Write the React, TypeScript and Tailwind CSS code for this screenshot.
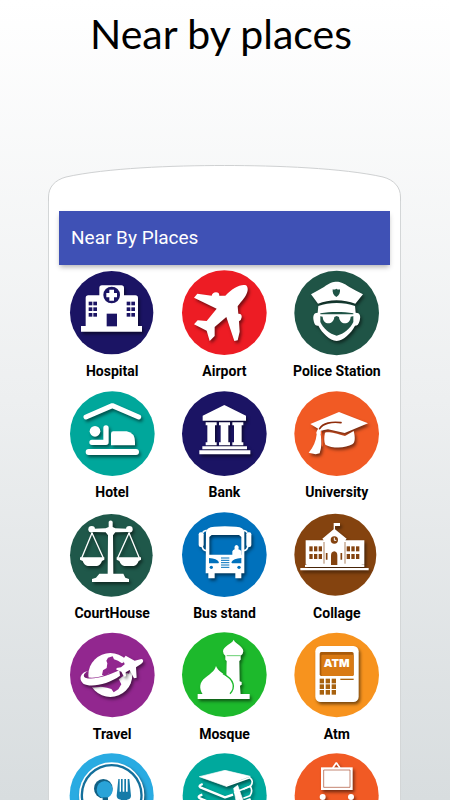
import type { ReactNode } from "react";

const SHADOW = "[filter:drop-shadow(5px_7px_4px_rgba(0,0,0,0.5))]";

type BadgeProps = { x: number; y: number; color: string; cx: number; cy: number; r?: number; children: ReactNode };

function Badge({ x, y, color, cx, cy, r = 126, children }: BadgeProps) {
  return (
    <svg viewBox={`${x} ${y} 255 255`} className="block size-[85px] overflow-visible" aria-hidden="true">
      <circle cx={cx} cy={cy} r={r} fill={color} />
      {children}
    </svg>
  );
}

function Hospital() {
  const c = "#1b1464";
  return (
    <Badge x={30} y={24} color={c} cx={155} cy={152} r={125}>
      <g className={SHADOW} fill="#fff">
        <path d="M118 78q0-8 8-8h58q8 0 8 8v22h34q8 0 8 8v84h12v17H63v-17h14v-84q0-8 8-8h33z" />
      </g>
      <circle cx="155" cy="99" r="25" fill={c} />
      <path d="M148 83h14v10h9v13h-9v10h-14v-10h-9v-13h9z" fill="#fff" />
      {[119, 136, 153].map((y) =>
        [86, 100, 200, 214].map((x) => <rect key={`${x}-${y}`} x={x} y={y} width="11" height="11" fill={c} />),
      )}
      <rect x="140" y="155" width="31" height="38" fill={c} />
    </Badge>
  );
}

function Airport() {
  return (
    <Badge x={30} y={24} color="#ed1c24" cx={157} cy={152} r={127}>
      <path
        className={SHADOW}
        fill="#fff"
        d="M222 70C232 78 228 98 205 122L197 133L199 155Q210 154 209 166Q208 175 201 178L203 209L197 235L187 237L163 165L128 195L128 222L113 237L104 206L66 187L77 175L104 177L134 140L66 107L76 95L119 101Q121 92 132 91Q142 91 142 101L160 101C180 80 206 65 222 70z"
      />
    </Badge>
  );
}

function Police() {
  const c = "#1f5446";
  return (
    <Badge x={30} y={24} color={c} cx={158} cy={153} r={127}>
      <g className={SHADOW} fill="#fff">
        <path d="M81 97c16-9 26-14 39-22 17-13 27-16 38-16s22 4 38 16c13 8 24 13 41 22l-23 28c-34-14-79-14-112 0z" />
        <path d="M103 132c32-12 78-12 110 0l2 20c13 0 16 10 12 24-3 11-7 15-14 15-13 24-33 43-55 46-22-3-42-22-55-46-8 0-12-4-14-15-3-14 0-24 12-24z" />
      </g>
      <path d="M157 80c4 3 8 3 11 2 1 10-2 18-11 23-9-5-12-13-11-23 3 1 7 1 11-2z" fill={c} />
      <path d="M109 154c30-5 68-5 99 0v26c-8 18-28 36-50 41-22-5-41-23-49-41z" fill={c} />
      <path d="M106 157h104v5l-10 2c-1 27-33 26-35 1l-7-3-7 3c-2 25-34 26-35-1l-10-2z" fill="#fff" />
    </Badge>
  );
}

function Hotel() {
  return (
    <Badge x={30} y={18} color="#00a79b" cx={157} cy={146} r={127}>
      <g className={SHADOW} fill="#fff">
        <path d="M78 96l79-34 79 34" fill="none" stroke="#fff" strokeWidth="15" strokeLinecap="round" strokeLinejoin="bevel" />
        <circle cx="105" cy="139" r="16" />
        <path d="M138 129v43H96" fill="none" stroke="#fff" strokeWidth="16" strokeLinecap="round" strokeLinejoin="round" />
        <path d="M153 181v-35q0-7 7-7h40q25 4 25 32v10z" />
        <rect x="77" y="192" width="160" height="18" rx="9" />
      </g>
    </Badge>
  );
}

function Bank() {
  return (
    <Badge x={30} y={18} color="#1b1464" cx={157} cy={146} r={127}>
      <g className={SHADOW} fill="#fff">
        <path d="M157 60l65 32v15H92V92z" />
        {[101, 141, 181].map((x) => (
          <path key={x} d={`M${x} 112h33v9h-5v51h5v9h-33v-9h5v-51h-5z`} />
        ))}
        <path d="M91 184h134v9H91zM82 196h153v12H82z" />
      </g>
    </Badge>
  );
}

function University() {
  const c = "#f15a24";
  return (
    <Badge x={366} y={18} color={c} cx={494} cy={146} r={127}>
      <g className={SHADOW} fill="#fff">
        <path d="M415 117l86-36 87 34-70 29-50-11-12 2-8 2z" />
        <path d="M459 143c11-4 29 1 60 10l26-15c5 18 5 36-4 40-19 12-60 13-81 1-4-10-4-22-1-36z" />
        <path d="M435 137q3-9 11-4 4 7 0 15c4 20 3 40-3 57l-12 3-21-5c14-15 22-35 24-55q-3-5 1-11z" />
      </g>
      <path d="M507 113c-28-4-55 2-64 18" fill="none" stroke="#8f2c0a" strokeWidth="5" strokeLinecap="round" />
      <path d="M448 139c0 8 5 30 3 45" fill="none" stroke={c} strokeWidth="4" />
    </Badge>
  );
}

function CourtHouse() {
  return (
    <Badge x={30} y={21} color="#1f584a" cx={154} cy={151} r={124}>
      <g className={SHADOW} fill="#fff">
        <path d="M146 50q6-7 12 0v16l8 4 38 1v10l-38 1-7 9 1 117h-17l1-117-7-9-38-1V71l38-1 9-4z" />
        <circle cx="95" cy="73" r="10" />
        <circle cx="208" cy="73" r="10" />
        <path d="M96 84l-31 75M96 84l34 75M207 84l-34 75M207 84l31 75" stroke="#fff" strokeWidth="4" fill="none" />
        <path d="M60 157h73v7l-7 4q-5 14-15 15H83q-10-1-15-15l-8-4zM170 157h73v7l-7 4q-5 14-15 15h-28q-10-1-15-15l-8-4z" />
        <path d="M118 206h72l6 12 11 4v9H96v-9l12-4z" />
      </g>
    </Badge>
  );
}

function Bus() {
  const c = "#0071bc";
  return (
    <Badge x={30} y={21} color={c} cx={157} cy={149} r={127}>
      <g className={SHADOW} fill="#fff">
        <path
          fillRule="evenodd"
          d="M102 82q0-15 25-17 31-3 65 0 25 2 25 17v123h-9v15h-18v-15h-62v15h-19v-15h-8zM112 96v53h96V96l-7-6h-82z"
        />
        <rect x="80" y="82" width="15" height="44" rx="6" />
        <rect x="223" y="82" width="15" height="44" rx="6" />
        <path d="M90 122q2 15 13 15M228 122q-2 15-13 15M92 83q3-6 12-7M226 83q-3-6-12-7" fill="none" stroke="#fff" strokeWidth="5" />
      </g>
      <path d="M181 150v-11q2-5 7-6-2-12 5-13 10 2 6 13 7 1 9 6v11z" fill="#fff" />
      <path d="M111 159q24 1 30 13l-2 3h-28zM208 159q-24 1-30 13l2 3h28z" fill={c} />
      <circle cx="118" cy="187" r="5" fill={c} />
      <circle cx="201" cy="187" r="5" fill={c} />
      <path d="M147 159h25M147 166h25M147 173h25M147 180h25M147 187h25" stroke={c} strokeWidth="3" />
    </Badge>
  );
}

function Collage() {
  const c = "#84430f";
  return (
    <Badge x={366} y={21} color={c} cx={490} cy={149} r={123}>
      <g className={SHADOW} fill="#fff">
        <path d="M485 54h19v9h-15v10l35 28-4 5h57v73h-8v4h-164v-4h-4v-73h54l-4-5 34-28z" />
        <path d="M399 180h178v6H399zM385 189h205v7H385z" />
      </g>
      <path d="M456 111v65M519 111v65" stroke={c} strokeWidth="2" />
      <circle cx="487" cy="105" r="11" fill={c} />
      <path d="M487 98v8h6" stroke="#fff" strokeWidth="3" fill="none" />
      {[124, 147].map((y) =>
        [412, 426, 440, 524, 538, 552].map((x) => (
          <rect key={`${x}-${y}`} x={x} y={y} width="10" height="15" fill={c} />
        )),
      )}
      <path d="M477 180v-28q0-12 10-13 9 1 9 13v28z" fill={c} />
      <path d="M464 144v20M508 144v20" stroke={c} strokeWidth="5" />
    </Badge>
  );
}

function Travel() {
  const c = "#92278f";
  return (
    <Badge x={30} y={24} color={c} cx={157} cy={150} r={127}>
      <g className={SHADOW}>
        <circle cx="151" cy="150" r="66" fill="#fff" />
      </g>
      <path
        d="M144 98l14-4 4 9 12 4 12 8 16-9 13 16-8 24-20-6-11 6-9-8-6 10-16-2-10 8-9-4 3-14 11-7 2-14-3-8z"
        fill={c}
      />
      <path d="M105 172l31-3 12 3 27-12 9 18-9 15-14 9-7-10-13-4-17-3z" fill={c} />
      <path d="M80 140q-14 13-4 20c28 10 80-6 116-35l12 8c-35 38-96 60-131 44-20-10-14-31 7-37z" fill={c} stroke={c} strokeWidth="10" />
      <g className={SHADOW} fill="#fff">
        <path d="M84 138c-12 6-17 15-8 20 22 9 69-6 102-22l2 16c-34 25-87 37-110 24-16-13-8-34 14-38z" />
        <path d="M244 102c8 2 7 10-1 15l-15 10 2 31-8 2-13-25-12 7 1 12-6 1-8-15-15-6 1-5 13-2 11-9-5-15 8-11 27 15z" />
      </g>
    </Badge>
  );
}

function Mosque() {
  const c = "#1db92c";
  return (
    <Badge x={30} y={24} color={c} cx={157} cy={149} r={127}>
      <g className={SHADOW} fill="#fff">
        <path d="M185 44c4 12 29 19 29 35q0 8-8 13v12l-4 4 1 61 6 2v8l-5 3 2 27h-44l2-101-4-4V92q-7-5-7-13c0-16 28-23 32-35z" />
        <path d="M132 123c4 13 21 22 34 33 18 17 18 36 6 52H92c-12-18-9-37 7-49 12-11 28-18 33-36z" />
        <path d="M77 207h156v15H77z" />
      </g>
      <path d="M153 146c35 18 38 43 21 60" fill="none" stroke={c} strokeWidth="4" />
      <path d="M164 92h42" stroke={c} strokeWidth="2" />
    </Badge>
  );
}

function Atm() {
  return (
    <Badge x={366} y={24} color="#f7931e" cx={494} cy={150} r={127}>
      <rect className={SHADOW} x="430" y="63" width="130" height="168" rx="16" fill="#fff" />
      <rect x="443" y="81" width="102" height="72" rx="5" fill="#a85b0b" />
      <rect x="448" y="89" width="97" height="64" rx="4" fill="#d97a14" />
      <text x="494" y="126" textAnchor="middle" fontSize="33" fontWeight="900" fill="#fff" className="font-['Inter',sans-serif]">
        ATM
      </text>
      {[161, 178, 195].map((y) =>
        [443, 461, 479].map((x) => <rect key={`${x}-${y}`} x={x} y={y} width="13" height="14" fill="#a8620f" />),
      )}
      <path d="M505 163h40" stroke="#a8620f" strokeWidth="4" />
    </Badge>
  );
}

function Restaurant() {
  return (
    <Badge x={90} y={42} color="#29abe2" cx={215} cy={166}>
      <circle className={SHADOW} cx="215" cy="165" r="98" fill="#fff" />
      <circle cx="215" cy="165" r="93" fill="#136f9b" />
      <circle cx="215" cy="165" r="86" fill="#fff" />
      <ellipse cx="190" cy="146" rx="28" ry="29" fill="#116084" />
      <ellipse cx="194" cy="149" rx="24" ry="26" fill="#29a3d8" />
      <path d="M188 172h16v90h-16z" fill="#116084" />
      <path d="M235 117h4v38h4v-38h5v38h5v-38h5v38h5v-38h5l5 50q0 10-12 12v80h-18v-80q-13-2-13-12z" fill="#167ba8" />
    </Badge>
  );
}

function Library() {
  const c = "#00a99d";
  return (
    <Badge x={426} y={42} color={c} cx={554} cy={166}>
      <g className={SHADOW} fill="none" stroke="#fff" strokeWidth="5" strokeLinejoin="round">
        <path d="M478 110l77-19 76 18-75 29z" fill="#fff" strokeWidth="2" />
        <path d="M557 139l72-26q14 10 3 25l-50 20" />
        <path d="M488 132q-14 5-7 10l74 30 24-8" strokeWidth="7" />
        <path d="M610 148l20-9q10 12 0 28l-20 8" />
        <path d="M487 164q-17 5-7 11l76 32 76-30" strokeWidth="7" />
        <path d="M581 145l12-9 10 28 8 21-12-6-10 8z" fill="#fff" strokeWidth="2" />
      </g>
    </Badge>
  );
}

function Gallery() {
  return (
    <Badge x={762} y={42} color="#f15a24" cx={890} cy={166}>
      <g className={SHADOW} fill="#fff">
        <path d="M878 84l11-16 11 16" fill="none" stroke="#fff" strokeWidth="5" strokeLinejoin="bevel" />
        <path d="M843 82h95v68h-95z" />
        <circle cx="848" cy="171" r="9" />
        <circle cx="933" cy="171" r="9" />
        <path d="M838 181h20l4 50h-28zM923 181h20l4 50h-28z" />
      </g>
      <path d="M851 90h79v52h-79z" fill="none" stroke="#a84a2c" strokeWidth="2" />
    </Badge>
  );
}

const places: { name: string; icon: ReactNode; iconOnly?: boolean }[] = [
  { name: "Hospital", icon: <Hospital /> },
  { name: "Airport", icon: <Airport /> },
  { name: "Police Station", icon: <Police /> },
  { name: "Hotel", icon: <Hotel /> },
  { name: "Bank", icon: <Bank /> },
  { name: "University", icon: <University /> },
  { name: "CourtHouse", icon: <CourtHouse /> },
  { name: "Bus stand", icon: <Bus /> },
  { name: "Collage", icon: <Collage /> },
  { name: "Travel", icon: <Travel /> },
  { name: "Mosque", icon: <Mosque /> },
  { name: "Atm", icon: <Atm /> },
  { name: "Restaurant", icon: <Restaurant />, iconOnly: true },
  { name: "Library", icon: <Library />, iconOnly: true },
  { name: "Gallery", icon: <Gallery />, iconOnly: true },
];

export default function App() {
  return (
    <div className="flex h-screen flex-col overflow-hidden bg-linear-to-b from-white via-[#edeff0] to-[#d8dddf] font-['Roboto',sans-serif]">
      <h1 className="h-[165px] shrink-0 pt-2 pr-2 text-center font-['Lato',sans-serif] text-[41px] leading-[52px] text-black">
        Near by places
      </h1>
      <main className="mr-[49px] ml-12 shrink-0">
        <svg viewBox="0 0 353 36" preserveAspectRatio="none" className="block h-9 w-full" aria-hidden="true">
          <path
            d="M.5 37V32C.5 22 7 15 18 12 58 3 125 .5 176.500 .5S295 3 335 12C346 15 352.500 22 352.500 32V37"
            fill="#fff"
            stroke="#cfd1d2"
            vectorEffect="non-scaling-stroke"
          />
        </svg>
        <div className="border-x border-[#d3d6d7] bg-white px-[10px] pt-[10px]">
          <header className="flex h-[54px] items-center bg-[#3f51b5] px-3 shadow-[0_3px_5px_-1px_rgba(0,0,0,0.3)]">
            <h2 className="text-[19px] leading-6 text-white">Near By Places</h2>
          </header>
          <ul className="grid grid-cols-3 gap-x-[6px] gap-y-[10px] pt-[5px]">
            {places.map(({ name, icon, iconOnly }) => (
              <li key={name} className="flex justify-center">
                <button type="button" aria-label={iconOnly ? name : undefined} className="flex flex-col items-center gap-[6px]">
                  {icon}
                  {!iconOnly && <span className="text-sm leading-5 font-bold whitespace-nowrap text-black">{name}</span>}
                </button>
              </li>
            ))}
          </ul>
        </div>
      </main>
    </div>
  );
}
